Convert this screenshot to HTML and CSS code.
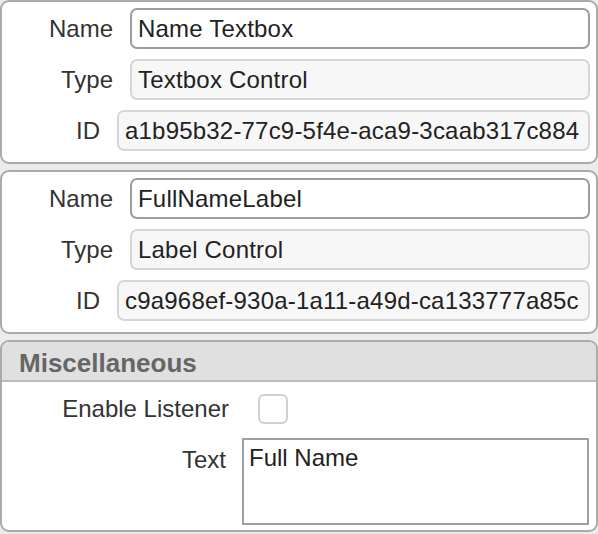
FILE: index.html
```html
<!DOCTYPE html>
<html>
<head>
<meta charset="utf-8">
<link rel="stylesheet" href="styles.css">
</head>
<body>
<div class="stack">
  <section class="panel">
    <div class="row">
      <span class="label">Name</span>
      <div class="field field-edit w-name">Name Textbox</div>
    </div>
    <div class="row">
      <span class="label">Type</span>
      <div class="field field-ro w-name">Textbox Control</div>
    </div>
    <div class="row">
      <span class="label">ID</span>
      <div class="field field-ro w-id">a1b95b32-77c9-5f4e-aca9-3caab317c884</div>
    </div>
  </section>
  <section class="panel">
    <div class="row">
      <span class="label">Name</span>
      <div class="field field-edit w-name">FullNameLabel</div>
    </div>
    <div class="row">
      <span class="label">Type</span>
      <div class="field field-ro w-name">Label Control</div>
    </div>
    <div class="row">
      <span class="label">ID</span>
      <div class="field field-ro w-id">c9a968ef-930a-1a11-a49d-ca133777a85c</div>
    </div>
  </section>
  <section class="panel panel-misc">
    <header class="misc-head">Miscellaneous</header>
    <div class="misc-body">
      <div class="misc-row misc-row-check">
        <span class="misc-label misc-label-check">Enable Listener</span>
        <span class="checkbox"></span>
      </div>
      <div class="misc-row misc-row-text">
        <span class="misc-label misc-label-text">Text</span>
        <div class="textarea">Full Name</div>
      </div>
    </div>
  </section>
</div>
</body>
</html>
```
FILE: styles.css
```css
html, body {
  margin: 0;
  padding: 0;
  background: #ececec;
}
body {
  font-family: "Liberation Sans", Arial, Helvetica, sans-serif;
  font-size: 24px;
  color: #333;
  width: 598px;
  height: 534px;
  overflow: hidden;
}
.stack {
  display: flex;
  flex-direction: column;
  gap: 6px;
}
.panel {
  background: #fff;
  border: 2px solid #ababab;
  border-radius: 9px;
  width: 598px;
  box-sizing: border-box;
  padding: 6px 6px 11px 0;
  display: flex;
  flex-direction: column;
  gap: 10px;
}
.row {
  display: flex;
  justify-content: flex-end;
  align-items: center;
  gap: 17px;
  height: 41px;
}
.label {
  color: #333;
}
.field {
  box-sizing: border-box;
  height: 41px;
  border-radius: 7px;
  padding: 0 6px;
  display: flex;
  align-items: center;
  color: #222;
  white-space: nowrap;
  overflow: hidden;
  letter-spacing: 0.2px;
}
.field-edit {
  border: 2px solid #9d9d9d;
  background: #fff;
}
.field-ro {
  border: 2px solid #d6d6d6;
  background: #f7f7f7;
}
.w-name { width: 460px; }
.w-id { width: 473px; }

.panel-misc {
  padding: 0;
  gap: 0;
  height: 192px;
  overflow: hidden;
}
.misc-head {
  background: #e0e0e0;
  border-bottom: 2px solid #bdbdbd;
  height: 40px;
  box-sizing: border-box;
  padding: 5px 0 0 17px;
  display: flex;
  align-items: center;
  font-weight: bold;
  font-size: 26px;
  color: #666;
}
.misc-body {
  display: flex;
  flex-direction: column;
  padding-top: 12px;
  gap: 14px;
}
.misc-row {
  display: flex;
  align-items: center;
}
.misc-row-text {
  align-items: flex-start;
}
.misc-label {
  text-align: right;
  color: #333;
}
.misc-label-check {
  width: 227px;
  margin-right: 29px;
}
.misc-label-text {
  width: 224px;
  margin-right: 16px;
  padding-top: 8px;
}
.checkbox {
  width: 30px;
  height: 30px;
  box-sizing: border-box;
  border: 2px solid #d0d0d0;
  border-radius: 6px;
  background: #fff;
}
.textarea {
  width: 347px;
  height: 87px;
  box-sizing: border-box;
  border: 2px solid #9f9f9f;
  padding: 5px 5px;
  color: #222;
  line-height: 26px;
}
```
